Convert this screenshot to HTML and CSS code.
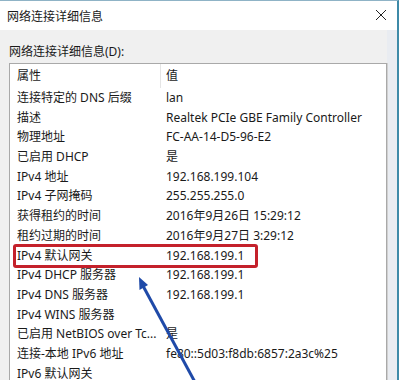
FILE: index.html
```html
<!DOCTYPE html>
<html lang="zh-CN">
<head>
    <meta charset="UTF-8">
    <title>网络连接详细信息</title>
    <link rel="stylesheet" href="styles.css">
</head>
<body>
    <div class="window">
        <div class="titlebar">
            <span class="title">网络连接详细信息</span>
            <svg class="close" width="12" height="12" viewBox="0 0 12 12">
                <path d="M1 1 L11 11 M11 1 L1 11" stroke="#222" stroke-width="1"/>
            </svg>
        </div>

        <div class="content">
            <div class="label">网络连接详细信息(D):</div>
            <div class="list">
                <div class="row head"><div class="c1">属性</div><div class="c2">值</div></div>
                <div class="row"><div class="c1">连接特定的 DNS 后缀</div><div class="c2">lan</div></div>
                <div class="row"><div class="c1">描述</div><div class="c2">Realtek PCIe GBE Family Controller</div></div>
                <div class="row"><div class="c1">物理地址</div><div class="c2">FC-AA-14-D5-96-E2</div></div>
                <div class="row"><div class="c1">已启用 DHCP</div><div class="c2">是</div></div>
                <div class="row"><div class="c1">IPv4 地址</div><div class="c2">192.168.199.104</div></div>
                <div class="row"><div class="c1">IPv4 子网掩码</div><div class="c2">255.255.255.0</div></div>
                <div class="row"><div class="c1">获得租约的时间</div><div class="c2">2016年9月26日 15:29:12</div></div>
                <div class="row"><div class="c1">租约过期的时间</div><div class="c2">2016年9月27日 3:29:12</div></div>
                <div class="row"><div class="c1">IPv4 默认网关</div><div class="c2">192.168.199.1</div></div>
                <div class="row"><div class="c1">IPv4 DHCP 服务器</div><div class="c2">192.168.199.1</div></div>
                <div class="row"><div class="c1">IPv4 DNS 服务器</div><div class="c2">192.168.199.1</div></div>
                <div class="row"><div class="c1">IPv4 WINS 服务器</div><div class="c2"></div></div>
                <div class="row"><div class="c1">已启用 NetBIOS over Tc...</div><div class="c2">是</div></div>
                <div class="row"><div class="c1">连接-本地 IPv6 地址</div><div class="c2">fe80::5d03:f8db:6857:2a3c%25</div></div>
                <div class="row"><div class="c1">IPv6 默认网关</div><div class="c2"></div></div>
            </div>
        </div>

        <!-- annotation drawn over the dialog -->
        <svg class="marks" width="399" height="380" viewBox="0 0 399 380">
            <rect x="14.5" y="245.5" width="242" height="21" rx="1.5" fill="none" stroke="#c4212b" stroke-width="3"/>
            <line x1="196" y1="384" x2="142" y2="284" stroke="#1f4aa8" stroke-width="3"/>
            <polygon points="139,277 148,285 139.5,290" fill="#1f4aa8"/>
        </svg>
    </div>
</body>
</html>
```

FILE: styles.css
```css
* {
    margin: 0;
    padding: 0;
    box-sizing: border-box;
}

body {
    font-family: 'Noto Sans', 'Noto Sans CJK SC', sans-serif;
    font-size: 12px;
    color: #1a1a1a;
    background: #f0f0f0;
    overflow: hidden;
}

.window {
    position: relative;
    width: 399px;
    height: 380px;
    background: #f0f0f0;
    border-top: 1px solid #8fb3c6;
    border-right: 2px solid #3e8aa8;
    overflow: hidden;
}

.titlebar {
    height: 29px;
    background: #fff;
    display: flex;
    align-items: center;
    justify-content: space-between;
    padding: 0 10px 0 7px;
}

.close {
    margin-top: -1px;
}

.content {
    padding: 12px 0 0 9px;
    box-shadow: inset -10px 0 0 #e9ecf1;
}

.label {
    line-height: 20px;
    margin-bottom: 1px;
}

.list {
    width: 378px;
    background: #fff;
    border: 1px solid #a9a9a9;
    border-bottom: none;
    box-shadow: 1px 0 0 #d0d0d0;
}

.row {
    display: grid;
    grid-template-columns: 151px 1fr;
    height: 19.7px;
    line-height: 19.7px;
    white-space: nowrap;
}

.row .c1 {
    padding-left: 7px;
    overflow: hidden;
}

.row .c2 {
    padding-left: 5px;
}

.row.head {
    height: 24px;
    line-height: 24px;
}

.row.head .c1 {
    border-right: 1px solid #e5e5e5;
}

.marks {
    position: absolute;
    top: -1px;
    left: 0;
    pointer-events: none;
}
```
